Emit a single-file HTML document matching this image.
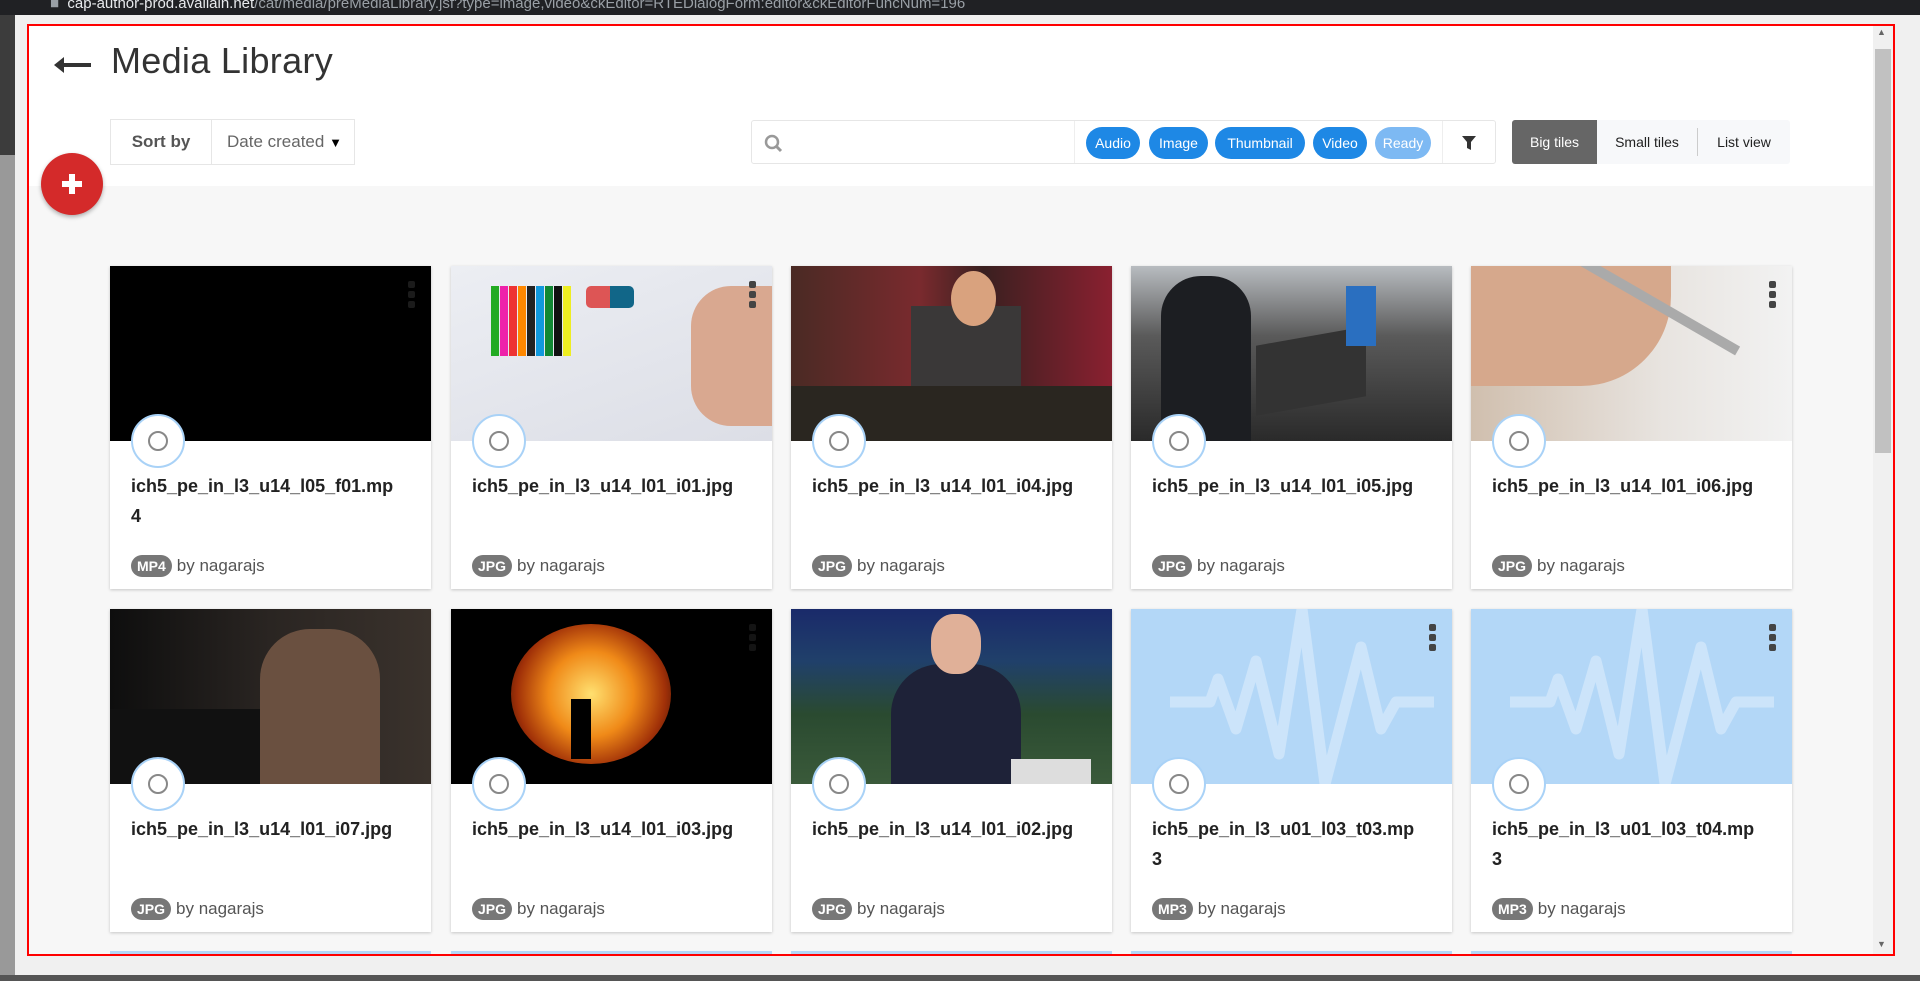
<!DOCTYPE html>
<html><head><meta charset="utf-8"><style>
*{box-sizing:border-box;margin:0;padding:0}
body{width:1920px;height:981px;overflow:hidden;background:#f0f0f0;font-family:"Liberation Sans",sans-serif;position:relative}
.abs{position:absolute}
.topbar{left:0;top:0;width:1920px;height:15px;background:#202124;color:#9aa0a6;font-size:15px;line-height:8px;padding-left:50px;overflow:hidden;white-space:nowrap}
.topbar b{color:#e8eaed;font-weight:normal}
.page{left:28px;top:25px;width:1866px;height:930px;background:#f7f7f7;overflow:hidden}
.border{left:27px;top:24px;width:1868px;height:932px;border:2px solid #f00;pointer-events:none;z-index:10}
.header{left:0;top:0;width:1845px;height:161px;background:#fff}
.title{left:83px;top:15px;font-size:36px;color:#333;letter-spacing:0.3px}
.sort{left:82px;top:94px;width:245px;height:46px;border:1px solid #e6e6e6;background:#fff;font-size:17px;line-height:44px}
.sort .l{position:absolute;left:0;width:101px;text-align:center;font-weight:bold;color:#555;border-right:1px solid #e6e6e6;height:44px}
.sort .r{position:absolute;left:116px;color:#666}
.search{left:723px;top:95px;width:745px;height:44px;border:1px solid #e6e6e6;border-radius:3px;background:#fff}
.pill{position:absolute;top:6px;height:32px;border-radius:16px;background:#1e88e5;color:#fff;font-size:14px;line-height:32px;text-align:center}
.views{left:1484px;top:95px;width:278px;height:44px;background:#f7f8fa;border-radius:3px;font-size:14px;line-height:44px}
.views span{position:absolute;top:0;text-align:center;height:44px;color:#222}
.fab{left:13px;top:128px;width:62px;height:62px;border-radius:50%;background:#d42a2a;box-shadow:0 2px 4px rgba(0,0,0,.3)}
.card{position:absolute;width:321px;height:323px;background:#fff;box-shadow:0 1px 3px rgba(0,0,0,.2)}
.img{position:absolute;left:0;top:0;width:321px;height:175px;overflow:hidden}
.radio{position:absolute;left:21px;top:148px;width:54px;height:54px;border-radius:50%;background:#fff;border:2px solid #a9d2f7}
.radio:after{content:"";position:absolute;left:15px;top:15px;width:16px;height:16px;border:2px solid #888;border-radius:50%}
.name{position:absolute;left:21px;top:205px;width:267px;font-size:18px;font-weight:bold;color:#222;line-height:30px;word-break:break-all}
.meta{position:absolute;left:21px;top:289px;font-size:17px;color:#555;line-height:22px}
.badge{display:inline-block;background:#777;color:#fff;font-weight:bold;font-size:14px;border-radius:11px;padding:0 6px;height:22px;line-height:22px;margin-right:5px}
.keb{position:absolute;left:298px;top:15px;width:7px}
.keb i{display:block;width:7px;height:7px;background:#444;border-radius:2px;margin-bottom:3px}
</style></head><body>
<div class="abs topbar">■ &nbsp;<b>cap-author-prod.avallain.net</b>/cat/media/preMediaLibrary.jsf?type=image,video&amp;ckEditor=RTEDialogForm:editor&amp;ckEditorFuncNum=196</div>
<div class="abs" style="left:0;top:15px;width:15px;height:140px;background:#3c3c3c"></div>
<div class="abs" style="left:0;top:155px;width:15px;height:826px;background:#999"></div>
<div class="abs" style="left:0;top:975px;width:1920px;height:6px;background:#555"></div>
<div class="abs page">
 <div class="abs header">
  <svg class="abs" style="left:24px;top:30px" width="40" height="20" viewBox="0 0 40 20"><path d="M12 2 L2 10 L12 18 Z" fill="#333"/><rect x="8" y="8" width="31" height="4" fill="#333"/></svg>
  <div class="abs title">Media Library</div>
  <div class="abs sort"><span class="l">Sort by</span><span class="r">Date created <span style="color:#000;font-size:13px">▼</span></span></div>
  <div class="abs search">
   <svg class="abs" style="left:12px;top:13px" width="20" height="20" viewBox="0 0 20 20"><circle cx="8" cy="8" r="6" fill="none" stroke="#999" stroke-width="2.5"/><path d="M12 12 L17 17" stroke="#999" stroke-width="3"/></svg>
   <div class="abs" style="left:322px;top:0;width:1px;height:42px;background:#eee"></div>
   <div class="pill" style="left:334px;width:54px">Audio</div>
   <div class="pill" style="left:397px;width:59px">Image</div>
   <div class="pill" style="left:463px;width:90px">Thumbnail</div>
   <div class="pill" style="left:561px;width:54px">Video</div>
   <div class="pill" style="left:623px;width:56px;background:#7db9f3">Ready</div>
   <div class="abs" style="left:690px;top:0;width:1px;height:42px;background:#eee"></div>
   <svg class="abs" style="left:709px;top:14px" width="16" height="16" viewBox="0 0 16 16"><path d="M1 1 H15 L10 7 V15 L6 13 V7 Z" fill="#333"/></svg>
  </div>
  <div class="abs views">
   <span style="left:0;width:85px;background:#666;color:#fff;border-radius:3px 0 0 3px">Big tiles</span>
   <span style="left:85px;width:100px">Small tiles</span>
   <span style="left:185px;width:1px;height:28px;top:8px;background:#ccc"></span>
   <span style="left:186px;width:92px">List view</span>
  </div>
 </div>
 <div class="abs fab"><div class="abs" style="left:28px;top:21px;width:6px;height:20px;background:#fff"></div><div class="abs" style="left:21px;top:28px;width:20px;height:6px;background:#fff"></div></div>
 <div class="abs" style="left:1845px;top:0;width:21px;height:930px;background:#f0f0f0"></div>
 <div class="abs" style="left:1847px;top:24px;width:16px;height:404px;background:#c1c1c1"></div>
 <div class="abs" style="left:1849px;top:2px;font-size:9px;color:#666">▲</div>
 <div class="abs" style="left:1849px;top:914px;font-size:9px;color:#666">▼</div>
</div>

<!-- Row 1 -->
<div class="card" style="left:110px;top:266px"><div class="img" style="background:#000"></div><div class="keb" style="opacity:.4"><i></i><i></i><i></i></div><div class="radio"></div><div class="name">ich5_pe_in_l3_u14_l05_f01.mp4</div><div class="meta"><span class="badge">MP4</span>by nagarajs</div></div>
<div class="card" style="left:451px;top:266px"><div class="img" style="background:linear-gradient(160deg,#eceef3,#dcdee6)">
 <div class="abs" style="left:40px;top:20px;width:8px;height:70px;background:#2a2"></div><div class="abs" style="left:49px;top:20px;width:8px;height:70px;background:#e2a"></div><div class="abs" style="left:58px;top:20px;width:8px;height:70px;background:#e33"></div><div class="abs" style="left:67px;top:20px;width:8px;height:70px;background:#f80"></div><div class="abs" style="left:76px;top:20px;width:8px;height:70px;background:#222"></div><div class="abs" style="left:85px;top:20px;width:8px;height:70px;background:#19d"></div><div class="abs" style="left:94px;top:20px;width:8px;height:70px;background:#183"></div><div class="abs" style="left:103px;top:20px;width:8px;height:70px;background:#111"></div><div class="abs" style="left:112px;top:20px;width:8px;height:70px;background:#ee2"></div>
 <div class="abs" style="left:135px;top:20px;width:48px;height:22px;background:linear-gradient(90deg,#d55 50%,#168 50%);border-radius:5px"></div>
 <div class="abs" style="left:240px;top:20px;width:90px;height:140px;background:#d9a890;border-radius:40px 0 0 40px"></div>
</div><div class="keb"><i></i><i></i><i></i></div><div class="radio"></div><div class="name">ich5_pe_in_l3_u14_l01_i01.jpg</div><div class="meta"><span class="badge">JPG</span>by nagarajs</div></div>
<div class="card" style="left:791px;top:266px"><div class="img" style="background:linear-gradient(90deg,#4a2a24,#7a2a2e 40%,#3a2020 60%,#8a2030)"><div class="abs" style="left:120px;top:40px;width:110px;height:135px;background:#3a3838"></div><div class="abs" style="left:0;top:120px;width:321px;height:55px;background:#2a2620"></div><div class="abs" style="left:160px;top:5px;width:45px;height:55px;background:#d9a27e;border-radius:50%"></div></div><div class="radio"></div><div class="name">ich5_pe_in_l3_u14_l01_i04.jpg</div><div class="meta"><span class="badge">JPG</span>by nagarajs</div></div>
<div class="card" style="left:1131px;top:266px"><div class="img" style="background:linear-gradient(180deg,#b8bcc0,#5a5a5a 40%,#2a2a2a)"><div class="abs" style="left:30px;top:10px;width:90px;height:165px;background:#1c1e22;border-radius:40px 40px 0 0"></div><div class="abs" style="left:125px;top:70px;width:110px;height:70px;background:#333;transform:skewY(-10deg)"></div><div class="abs" style="left:215px;top:20px;width:30px;height:60px;background:#2a6fc0"></div></div><div class="radio"></div><div class="name">ich5_pe_in_l3_u14_l01_i05.jpg</div><div class="meta"><span class="badge">JPG</span>by nagarajs</div></div>
<div class="card" style="left:1471px;top:266px"><div class="img" style="background:linear-gradient(90deg,#d0bfae,#e8e4e0 60%,#f2f2f2)"><div class="abs" style="left:0;top:0;width:200px;height:120px;background:#d6a88c;border-radius:0 0 90px 0"></div><div class="abs" style="left:80px;top:30px;width:200px;height:10px;background:#aaa;transform:rotate(30deg)"></div></div><div class="keb"><i></i><i></i><i></i></div><div class="radio"></div><div class="name">ich5_pe_in_l3_u14_l01_i06.jpg</div><div class="meta"><span class="badge">JPG</span>by nagarajs</div></div>

<!-- Row 2 -->
<div class="card" style="left:110px;top:609px"><div class="img" style="background:linear-gradient(90deg,#0e0e0e,#2a2522 50%,#3a322c)"><div class="abs" style="left:0;top:100px;width:170px;height:75px;background:#111"></div><div class="abs" style="left:150px;top:20px;width:120px;height:155px;background:#6a5040;border-radius:50px 50px 0 0"></div></div><div class="radio"></div><div class="name">ich5_pe_in_l3_u14_l01_i07.jpg</div><div class="meta"><span class="badge">JPG</span>by nagarajs</div></div>
<div class="card" style="left:451px;top:609px"><div class="img" style="background:#000"><div class="abs" style="left:60px;top:15px;width:160px;height:140px;border-radius:50%;background:radial-gradient(circle,#ffe070 0%,#f08a18 40%,#a03008 70%,#000 100%)"></div><div class="abs" style="left:120px;top:90px;width:20px;height:60px;background:#000"></div></div><div class="keb" style="opacity:.3"><i></i><i></i><i></i></div><div class="radio"></div><div class="name">ich5_pe_in_l3_u14_l01_i03.jpg</div><div class="meta"><span class="badge">JPG</span>by nagarajs</div></div>
<div class="card" style="left:791px;top:609px"><div class="img" style="background:linear-gradient(180deg,#1a2a6a,#20406a 30%,#2a4a30 60%,#3a5a3a)"><div class="abs" style="left:100px;top:55px;width:130px;height:120px;background:#1e2238;border-radius:50px 50px 0 0"></div><div class="abs" style="left:140px;top:5px;width:50px;height:60px;background:#e0b098;border-radius:45%"></div><div class="abs" style="left:220px;top:150px;width:80px;height:25px;background:#ddd"></div></div><div class="radio"></div><div class="name">ich5_pe_in_l3_u14_l01_i02.jpg</div><div class="meta"><span class="badge">JPG</span>by nagarajs</div></div>
<div class="card" style="left:1131px;top:609px"><div class="img" style="background:#b3d7f7"><svg width="321" height="175"><path d="M39 93 H79 L87 70 L105 120 L125 52 L148 145 L171 0 L194 175 L230 38 L250 120 L265 93 H303" fill="none" stroke="#cce4fa" stroke-width="11" stroke-linejoin="round"/></svg></div><div class="keb"><i></i><i></i><i></i></div><div class="radio"></div><div class="name">ich5_pe_in_l3_u01_l03_t03.mp3</div><div class="meta"><span class="badge">MP3</span>by nagarajs</div></div>
<div class="card" style="left:1471px;top:609px"><div class="img" style="background:#b3d7f7"><svg width="321" height="175"><path d="M39 93 H79 L87 70 L105 120 L125 52 L148 145 L171 0 L194 175 L230 38 L250 120 L265 93 H303" fill="none" stroke="#cce4fa" stroke-width="11" stroke-linejoin="round"/></svg></div><div class="keb"><i></i><i></i><i></i></div><div class="radio"></div><div class="name">ich5_pe_in_l3_u01_l03_t04.mp3</div><div class="meta"><span class="badge">MP3</span>by nagarajs</div></div>

<!-- Row 3 peek -->
<div class="abs" style="left:110px;top:951px;width:321px;height:4px;background:#b3d7f7"></div>
<div class="abs" style="left:451px;top:951px;width:321px;height:4px;background:#b3d7f7"></div>
<div class="abs" style="left:791px;top:951px;width:321px;height:4px;background:#b3d7f7"></div>
<div class="abs" style="left:1131px;top:951px;width:321px;height:4px;background:#b3d7f7"></div>
<div class="abs" style="left:1471px;top:951px;width:321px;height:4px;background:#b3d7f7"></div>
<div class="abs border"></div>
</body></html>
